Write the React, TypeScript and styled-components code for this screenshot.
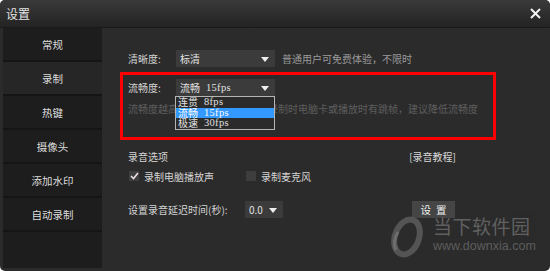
import React from "react";
import styled, { createGlobalStyle } from "styled-components";

const GlobalStyle = createGlobalStyle`
  html, body {
    margin: 0;
    padding: 0;
    background: #fff;
  }
  body {
    font-family: "Noto Sans CJK SC", "Liberation Sans", sans-serif;
  }
`;

const Window = styled.div`
  position: relative;
  width: 550px;
  height: 271px;
  border-radius: 5px;
  overflow: hidden;
  background: #2b2b2b;
  display: flex;
  flex-direction: column;
  color: #d6d6d6;
`;

const TitleBar = styled.div`
  height: 28px;
  flex: none;
  display: flex;
  align-items: center;
  justify-content: space-between;
  padding: 0 9px 0 6px;
  background: linear-gradient(#3a3a3a, #232323);
  border-bottom: 1px solid #1a1a1a;
  box-sizing: border-box;
`;

const Title = styled.span`
  font-size: 12px;
  color: #e4e4e4;
`;

const Body = styled.div`
  flex: 1;
  display: flex;
  padding: 0 0 3px 3px;
  min-height: 0;
`;

const Sidebar = styled.div`
  width: 99px;
  flex: none;
  display: flex;
  flex-direction: column;
  gap: 2px;
  background: #151515;
`;

const NavItem = styled.div<{ $active?: boolean }>`
  height: 32px;
  flex: none;
  display: flex;
  align-items: center;
  justify-content: center;
  font-size: 10.5px;
  color: #dcdcdc;
  background: ${(p) => (p.$active ? "#262626" : "#1d1d1d")};
`;

const SidebarRest = styled.div`
  flex: 1;
  background: #1d1d1d;
`;

const Content = styled.div`
  flex: 1;
  padding: 22px 0 0 26px;
  display: flex;
  flex-direction: column;
  font-size: 10px;
`;

const Row = styled.div`
  display: flex;
  align-items: center;
  height: 17px;
`;

const Label = styled.span`
  width: 48px;
  color: #d4d4d4;
  white-space: nowrap;
`;

const Hint = styled.span<{ $dim?: boolean }>`
  color: ${(p) => (p.$dim ? "#5e5e5e" : "#9a9a9a")};
  white-space: nowrap;
`;

const SelectBox = styled.div<{ $width: number }>`
  position: relative;
  width: ${(p) => p.$width}px;
  height: 17px;
  box-sizing: border-box;
  background: #3b3b3b;
  display: flex;
  align-items: center;
  padding: 0 0 0 4px;
  color: #e2e2e2;
  margin-right: 7px;
`;

const Arrow = styled.span`
  position: absolute;
  right: 6px;
  top: 7px;
  width: 0;
  height: 0;
  border-left: 4px solid transparent;
  border-right: 4px solid transparent;
  border-top: 5px solid #eee;
`;

const Fps = styled.span`
  font-family: "Liberation Serif", "Noto Sans CJK SC", serif;
  font-size: 10.5px;
  margin-left: 6px;
  letter-spacing: 0.3px;
`;

const RedFrame = styled.div`
  margin: 5px 0 0 -8px;
  width: 376px;
  height: 68px;
  box-sizing: border-box;
  border: 3px solid #ff0000;
  padding: 4px 0 0 5px;
  display: flex;
  flex-direction: column;
`;

const HintRow = styled.div`
  height: 12px;
  margin-top: 6px;
  display: flex;
  align-items: center;
`;

const DropList = styled.div`
  position: absolute;
  left: -1px;
  top: 17px;
  width: 100px;
  box-sizing: border-box;
  border: 1px solid #b5b5b5;
  background: #2b2b2b;
  z-index: 2;
  padding: 0;
`;

const DropItem = styled.div<{ $active?: boolean }>`
  height: 10.5px;
  line-height: 10.5px;
  display: flex;
  align-items: center;
  padding-left: 2px;
  color: ${(p) => (p.$active ? "#fff" : "#e0e0e0")};
  background: ${(p) => (p.$active ? "#3399ff" : "transparent")};
  font-size: 10px;
`;

const SectionRow = styled.div`
  width: 330px;
  margin-top: 10px;
  height: 12px;
  display: flex;
  align-items: center;
  justify-content: space-between;
`;

const Link = styled.span`
  color: #d8d8d8;
  margin-right: 2px;
`;

const CheckRow = styled.div`
  margin-top: 8px;
  height: 12px;
  display: flex;
  align-items: center;
  gap: 31px;
`;

const CheckItem = styled.label`
  display: flex;
  align-items: center;
  gap: 5px;
  color: #d4d4d4;
`;

const Box = styled.span`
  width: 10px;
  height: 10px;
  background: #3e3e3e;
  display: inline-flex;
  align-items: center;
  justify-content: center;
  margin-left: 1px;
`;

const DelayRow = styled.div`
  width: 327px;
  margin-top: 19px;
  height: 17px;
  display: flex;
  align-items: center;
`;

const DelayLabel = styled.span`
  width: 117px;
  color: #d4d4d4;
  white-space: nowrap;
`;

const Button = styled.div`
  margin-left: auto;
  width: 43px;
  height: 17px;
  background: #454545;
  color: #f0f0f0;
  display: flex;
  align-items: center;
  justify-content: center;
  letter-spacing: 5px;
  padding-left: 5px;
  box-sizing: border-box;
  font-size: 10.5px;
`;

const Watermark = styled.div`
  position: absolute;
  left: 390px;
  top: 212px;
  display: flex;
  align-items: flex-start;
  gap: 9px;
  pointer-events: none;
  opacity: 0.85;
`;

const WatermarkText = styled.div`
  display: flex;
  flex-direction: column;
  padding-top: 3px;
`;

const BrandName = styled.span`
  font-size: 19px;
  line-height: 22px;
  color: #6a6a6a;
  letter-spacing: 0.5px;
`;

const BrandUrl = styled.span`
  font-family: "Liberation Sans", sans-serif;
  font-size: 12.5px;
  line-height: 14px;
  color: #666;
  margin-top: 2px;
`;

const navItems = ["常规", "录制", "热键", "摄像头", "添加水印", "自动录制"];

const App = () => (
  <>
    <GlobalStyle />
    <Window>
      <TitleBar>
        <Title>设置</Title>
        <svg width="11" height="11" viewBox="0 0 11 11">
          <path d="M1 1 L10 10 M10 1 L1 10" stroke="#f2f2f2" strokeWidth="2" />
        </svg>
      </TitleBar>
      <Body>
        <Sidebar>
          {navItems.map((item) => (
            <NavItem key={item} $active={item === "录制"}>
              {item}
            </NavItem>
          ))}
          <SidebarRest />
        </Sidebar>
        <Content>
          <Row>
            <Label>清晰度:</Label>
            <SelectBox $width={99}>
              标清
              <Arrow />
            </SelectBox>
            <Hint>普通用户可免费体验，不限时</Hint>
          </Row>
          <RedFrame>
            <Row>
              <Label>流畅度:</Label>
              <SelectBox $width={99}>
                流畅<Fps>15fps</Fps>
                <Arrow />
                <DropList>
                  <DropItem>
                    连贯<Fps>8fps</Fps>
                  </DropItem>
                  <DropItem $active>
                    流畅<Fps>15fps</Fps>
                  </DropItem>
                  <DropItem>
                    极速<Fps>30fps</Fps>
                  </DropItem>
                </DropList>
              </SelectBox>
            </Row>
            <HintRow>
              <Hint $dim>流畅度越高，画面越流畅，如果录制时电脑卡或播放时有跳帧，建议降低流畅度</Hint>
            </HintRow>
          </RedFrame>
          <SectionRow>
            <Label>录音选项</Label>
            <Link>[录音教程]</Link>
          </SectionRow>
          <CheckRow>
            <CheckItem>
              <Box>
                <svg width="9" height="8" viewBox="0 0 9 8">
                  <path d="M1 4 L3.5 6.5 L8 1" stroke="#efdfe4" strokeWidth="1.6" fill="none" />
                </svg>
              </Box>
              录制电脑播放声
            </CheckItem>
            <CheckItem>
              <Box />
              录制麦克风
            </CheckItem>
          </CheckRow>
          <DelayRow>
            <DelayLabel>设置录音延迟时间(秒):</DelayLabel>
            <SelectBox $width={38}>
              0.0
              <Arrow />
            </SelectBox>
            <Button>设置</Button>
          </DelayRow>
        </Content>
      </Body>
      <Watermark>
        <svg width="34" height="48" viewBox="0 0 34 48">
          <ellipse cx="17" cy="25" rx="12" ry="18" fill="none" stroke="#5c5c5c" strokeWidth="6" transform="rotate(20 17 25)" />
          <path d="M6 38 Q2 30 8 20" stroke="#7a7a7a" strokeWidth="3" fill="none" />
        </svg>
        <WatermarkText>
          <BrandName>当下软件园</BrandName>
          <BrandUrl>www.downxia.com</BrandUrl>
        </WatermarkText>
      </Watermark>
    </Window>
  </>
);

export default App;
